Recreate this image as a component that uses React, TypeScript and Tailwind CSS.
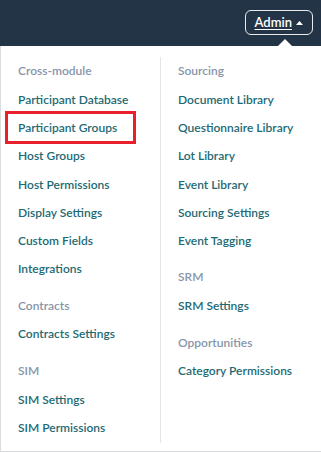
const left = [
  { title: 'Cross-module', items: ['Participant Database', 'Participant Groups', 'Host Groups', 'Host Permissions', 'Display Settings', 'Custom Fields', 'Integrations'] },
  { title: 'Contracts', items: ['Contracts Settings'] },
  { title: 'SIM', items: ['SIM Settings', 'SIM Permissions'] },
];

const right = [
  { title: 'Sourcing', items: ['Document Library', 'Questionnaire Library', 'Lot Library', 'Event Library', 'Sourcing Settings', 'Event Tagging'] },
  { title: 'SRM', items: ['SRM Settings'] },
  { title: 'Opportunities', items: ['Category Permissions'] },
];

type Group = { title: string; items: string[] };

function Column({ groups, className }: { groups: Group[]; className: string }) {
  return (
    <div className={className}>
      {groups.map((g, gi) => (
        <div key={g.title} className={gi > 0 ? 'mt-[7.5px]' : ''}>
          <div className="h-[29.5px] flex items-center text-[#8795a8]">{g.title}</div>
          {g.items.map((it) => (
            <div key={it} className="h-[28.2px] flex items-center">
              {it === 'Participant Groups' ? (
                <span className="relative">
                  <span className="absolute -left-[13px] w-[131px] -top-[8px] -bottom-[7px] border-[3px] border-[#e8202b]" />
                  <span className="text-[#1d6a73]">{it}</span>
                </span>
              ) : (
                <span className="text-[#1d6a73]">{it}</span>
              )}
            </div>
          ))}
        </div>
      ))}
    </div>
  );
}

export default function App() {
  return (
    <div className="w-[321px] h-[452px] bg-white overflow-hidden text-[12px] font-semibold" style={{ fontFamily: 'Lato, "Liberation Sans", sans-serif' }}>
      <div className="h-[46px] bg-[#243447] flex items-start justify-end pr-[8px] pt-[10px] relative">
        <div className="h-[25px] px-[9px] rounded-[6px] border border-white/90 flex items-center gap-[4px] text-white text-[13px]">
          <span className="underline underline-offset-2">Admin</span>
          <svg width="7" height="4" viewBox="0 0 7 4"><path d="M0 4 L3.5 0 L7 4 Z" fill="white" /></svg>
        </div>
        <svg className="absolute left-[278px] bottom-0" width="14" height="7" viewBox="0 0 14 7"><path d="M0 7 L7 0 L14 7 Z" fill="white" /></svg>
      </div>
      <div className="h-[406px] border-l border-b border-[#d9dcdf] flex pt-[10.5px] pb-[8px]">
        <Column groups={left} className="w-[159px] pl-[17px]" />
        <Column groups={right} className="flex-1 border-l border-[#e3e5e8] pl-[17px]" />
      </div>
    </div>
  );
}
